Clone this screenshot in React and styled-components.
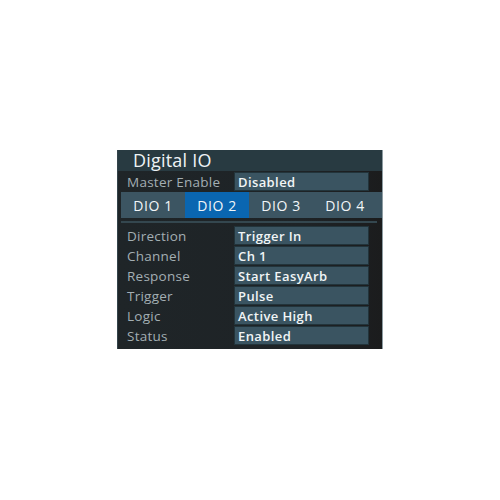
import React, { useState } from "react";
import styled, { createGlobalStyle } from "styled-components";

const GlobalStyle = createGlobalStyle`
  html, body {
    margin: 0;
    padding: 0;
    background: #ffffff;
  }
  body {
    font-family: "Open Sans", "Noto Sans", sans-serif;
  }
  * {
    box-sizing: border-box;
  }
`;

const Page = styled.div`
  width: 500px;
  height: 500px;
  padding: 150px 0 0 117px;
`;

const Panel = styled.div`
  width: 266px;
  height: 199px;
  border-left: 1px solid #34444b;
  border-right: 1px solid #8d9ca2;
  background: linear-gradient(90deg, #1f2528 0%, #1e2326 70%, #1b1c1d 100%);
`;

const TitleBar = styled.div`
  height: 21px;
  background: #283a41;
  color: #eef3f5;
  font-size: 18px;
  line-height: 21px;
  padding-left: 15px;
  letter-spacing: 0.2px;
`;

const Row = styled.div`
  display: flex;
  align-items: center;
  height: 18px;
  margin-top: ${(p) => p.$gap}px;
`;

const Label = styled.div`
  width: 116px;
  padding: 2px 0 0 9px;
  color: #a3aeb3;
  font-size: 13.5px;
  letter-spacing: 0.25px;
  line-height: 18px;
`;

const Value = styled.div`
  width: 135px;
  height: 19px;
  background: #3a5461;
  border: 1px solid #22343b;
  color: #f1f5f6;
  font-size: 13px;
  font-weight: 600;
  letter-spacing: 0.4px;
  line-height: 18px;
  padding-left: 3px;
`;

const TabBar = styled.div`
  display: grid;
  grid-template-columns: repeat(4, 64px);
  height: 26px;
  margin: 2px 0 0 3px;
  background: #3c5562;
`;

const Tab = styled.button`
  border: none;
  margin: 0;
  padding: 0;
  background: ${(p) => (p.$active ? "#0a66b1" : "transparent")};
  color: #f2f6f8;
  font-family: inherit;
  font-size: 14px;
  font-weight: 500;
  letter-spacing: 0.6px;
  cursor: pointer;
`;

const Separator = styled.div`
  height: 2px;
  margin: 3px 0 3px 3px;
  width: 256px;
  background: #34474f;
`;

const rows = [
  ["Direction", "Trigger In"],
  ["Channel", "Ch 1"],
  ["Response", "Start EasyArb"],
  ["Trigger", "Pulse"],
  ["Logic", "Active High"],
  ["Status", "Enabled"],
];

export default function App() {
  const [tab, setTab] = useState(1);
  return (
    <Page>
      <GlobalStyle />
      <Panel>
        <TitleBar>Digital IO</TitleBar>
        <Row $gap={1}>
          <Label>Master Enable</Label>
          <Value>Disabled</Value>
        </Row>
        <TabBar>
          {["DIO 1", "DIO 2", "DIO 3", "DIO 4"].map((t, i) => (
            <Tab key={t} $active={i === tab} onClick={() => setTab(i)}>
              {t}
            </Tab>
          ))}
        </TabBar>
        <Separator />
        {rows.map(([l, v]) => (
          <Row key={l} $gap={2}>
            <Label>{l}</Label>
            <Value>{v}</Value>
          </Row>
        ))}
      </Panel>
    </Page>
  );
}
